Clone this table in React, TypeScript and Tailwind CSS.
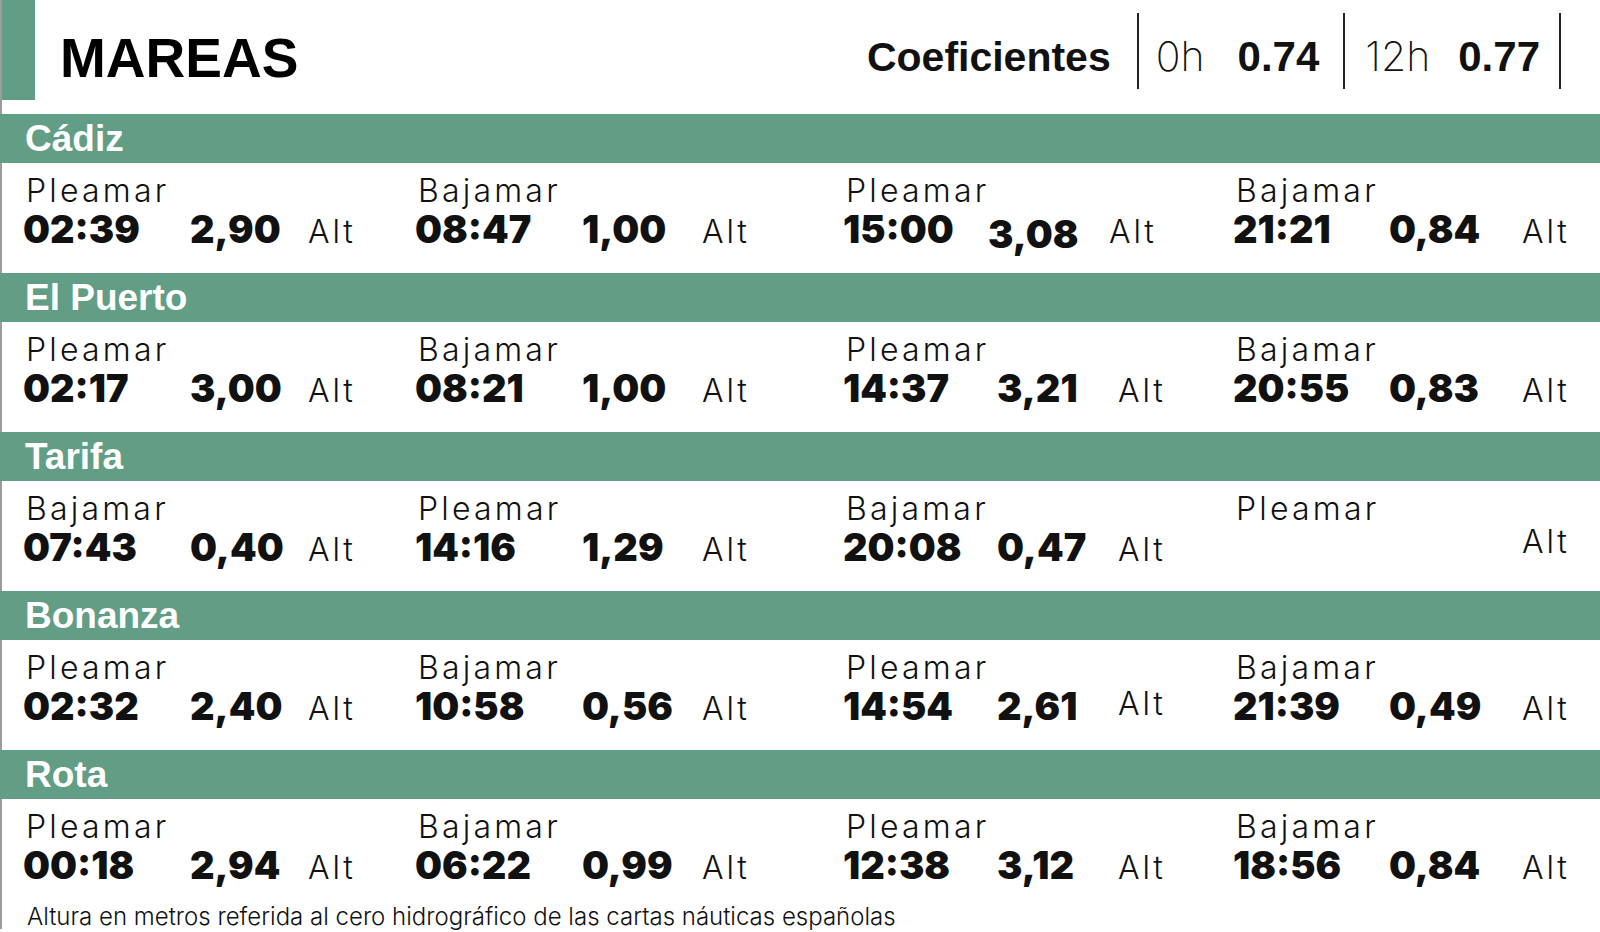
import React from "react";

type Tide = {
  label: string;
  time?: string;
  height?: string;
  valueClass?: string;
  altClass?: string;
};

type Station = {
  name: string;
  tides: Tide[];
};

const stations: Station[] = [
  {
    name: "Cádiz",
    tides: [
      { label: "Pleamar", time: "02:39", height: "2,90" },
      { label: "Bajamar", time: "08:47", height: "1,00" },
      { label: "Pleamar", time: "15:00", height: "3,08", valueClass: "-ml-[9px] translate-y-[5px]" },
      { label: "Bajamar", time: "21:21", height: "0,84" },
    ],
  },
  {
    name: "El Puerto",
    tides: [
      { label: "Pleamar", time: "02:17", height: "3,00" },
      { label: "Bajamar", time: "08:21", height: "1,00" },
      { label: "Pleamar", time: "14:37", height: "3,21" },
      { label: "Bajamar", time: "20:55", height: "0,83" },
    ],
  },
  {
    name: "Tarifa",
    tides: [
      { label: "Bajamar", time: "07:43", height: "0,40" },
      { label: "Pleamar", time: "14:16", height: "1,29" },
      { label: "Bajamar", time: "20:08", height: "0,47" },
      { label: "Pleamar", altClass: "-translate-y-[5px]" },
    ],
  },
  {
    name: "Bonanza",
    tides: [
      { label: "Pleamar", time: "02:32", height: "2,40" },
      { label: "Bajamar", time: "10:58", height: "0,56" },
      { label: "Pleamar", time: "14:54", height: "2,61", altClass: "-translate-y-[5px]" },
      { label: "Bajamar", time: "21:39", height: "0,49" },
    ],
  },
  {
    name: "Rota",
    tides: [
      { label: "Pleamar", time: "00:18", height: "2,94" },
      { label: "Bajamar", time: "06:22", height: "0,99" },
      { label: "Pleamar", time: "12:38", height: "3,12" },
      { label: "Bajamar", time: "18:56", height: "0,84" },
    ],
  },
];

// ancho de cada columna y de sus celdas
const cols = [
  { box: "w-[392px]", time: "w-[167px]", value: "w-[118px]" },
  { box: "w-[428px]", time: "w-[167px]", value: "w-[120px]" },
  { box: "w-[390px]", time: "w-[154px]", value: "w-[121px]" },
  { box: "flex-1", time: "w-[156px]", value: "w-[133px]" },
];

const light = "font-['Inter',sans-serif] font-light";
const heavy = "font-['Inter',sans-serif] font-black";
const arial = "font-['Liberation_Sans',Arial,sans-serif]";

const TideCell = ({ tide, col }: { tide: Tide; col: (typeof cols)[number] }) => (
  <div className={col.box}>
    <div className={`${light} text-[32px] leading-[32px] tracking-[0.1em] pl-[3px] text-[#111]`}>
      {tide.label}
    </div>
    <div className="flex items-baseline mt-[3px] h-[38px]">
      <div className={`${col.time} ${heavy} text-[38px] leading-[38px] text-[#111]`}>
        {tide.time}
      </div>
      <div className={`${col.value} ${heavy} text-[38px] leading-[38px] text-[#111] ${tide.valueClass ?? ""}`}>
        {tide.height}
      </div>
      <div className={`${light} text-[32px] leading-[38px] tracking-[0.09em] text-[#111] ${tide.altClass ?? ""}`}>
        Alt
      </div>
    </div>
  </div>
);

const App = () => {
  return (
    <div className="w-[1600px] h-[932px] bg-white overflow-hidden">
      {/* cabecera */}
      <div className="flex h-[114px] border-l-2 border-[#9c9c9c]">
        <div className="w-[33px] h-[100px] bg-[#629e85]" />
        <div className={`${arial} font-bold text-[55px] leading-[55px] ml-[25px] mt-[31px] text-black`}>
          MAREAS
        </div>
        <div className="ml-auto mr-[39px] flex items-start">
          <div className={`${arial} font-bold text-[41px] leading-[41px] mt-[37px] text-[#111]`}>
            Coeficientes
          </div>
          <div className="w-[2px] h-[76px] bg-[#222] mt-[13px] ml-[26px]" />
          <div className="font-['Inter',sans-serif] font-extralight text-[41px] leading-[41px] mt-[36px] ml-[17px] text-[#111]">
            0h
          </div>
          <div className={`${arial} font-bold text-[42px] leading-[42px] mt-[36px] ml-[33px] text-[#111]`}>
            0.74
          </div>
          <div className="w-[2px] h-[76px] bg-[#222] mt-[13px] ml-[24px]" />
          <div className="font-['Inter',sans-serif] font-extralight text-[41px] leading-[41px] mt-[36px] ml-[20px] text-[#111]">
            12h
          </div>
          <div className={`${arial} font-bold text-[42px] leading-[42px] mt-[36px] ml-[28px] text-[#111]`}>
            0.77
          </div>
          <div className="w-[2px] h-[76px] bg-[#222] mt-[13px] ml-[19px]" />
        </div>
      </div>

      {stations.map((station, i) => (
        <div key={station.name}>
          <div
            className={`${arial} font-bold h-[49px] leading-[49px] text-[37px] text-white bg-[#629e85] pl-[25px]`}
          >
            {station.name}
          </div>
          <div
            className={`flex border-l-2 border-[#9c9c9c] pl-[21px] pt-[12px] ${
              i === stations.length - 1 ? "h-[106px]" : "h-[110px]"
            }`}
          >
            {station.tides.map((tide, j) => (
              <TideCell key={j} tide={tide} col={cols[j]} />
            ))}
          </div>
        </div>
      ))}

      <div
        className={`${light} border-l-2 border-[#9c9c9c] pl-[25px] text-[24px] leading-[24px] text-[#111]`}
      >
        Altura en metros referida al cero hidrográfico de las cartas náuticas españolas
      </div>
    </div>
  );
};

export default App;
